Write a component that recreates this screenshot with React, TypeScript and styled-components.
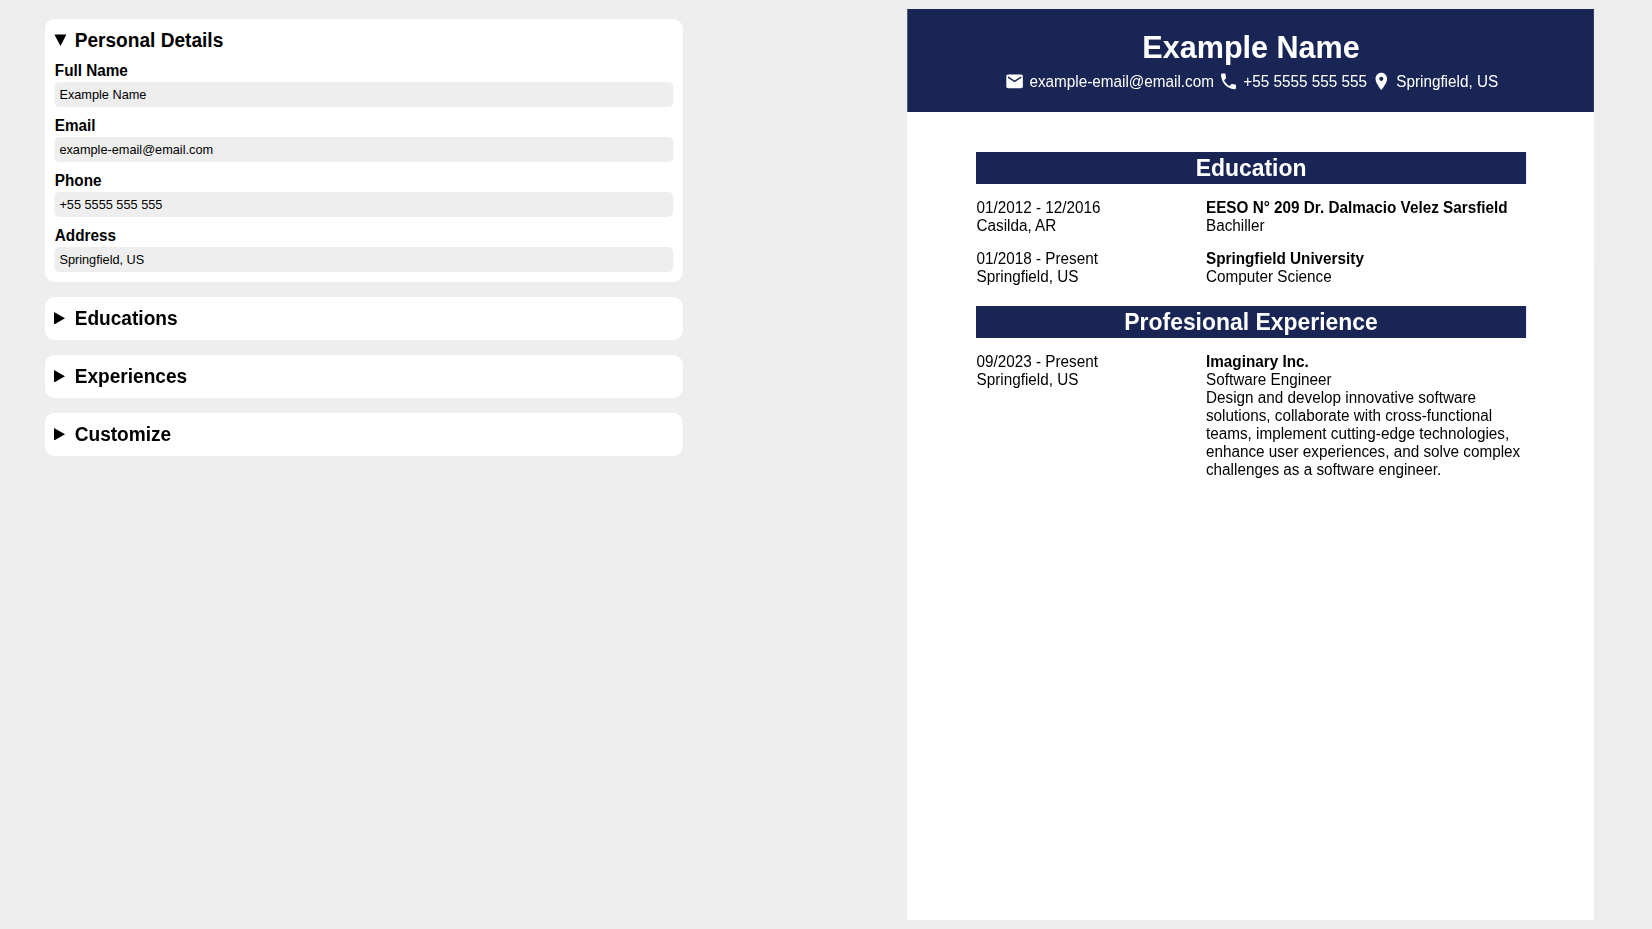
import { useState } from "react";
import styled, { createGlobalStyle } from "styled-components";
import { MdEmail, MdLocationOn, MdPhone } from "react-icons/md";

const NAVY = "#192655";

const GlobalStyle = createGlobalStyle`
  * { box-sizing: border-box; margin: 0; padding: 0; }
  body {
    background: #eee;
    color: #000;
    font: 16px/18px Arial, "Liberation Sans", sans-serif;
    overflow: hidden;
  }
`;

/* The layout is 1730px wide, condensed horizontally to fit a 1652px window. */
const Page = styled.div`
  display: flex;
  justify-content: space-between;
  align-items: flex-start;
  width: 1730px;
  height: 929px;
  padding: 9px 61px 9px 47px;
  transform: scaleX(0.955);
  transform-origin: 0 0;
`;

const Editor = styled.div`
  display: flex;
  flex-direction: column;
  gap: 15px;
  width: 668px;
  padding-top: 10px;
`;

const Card = styled.details`
  background: #fff;
  border-radius: 10px;
  padding: 9px 10px 10px;
`;

const CardTitle = styled.summary`
  display: flex;
  align-items: center;
  gap: 8.6px;
  height: 24px;
  margin-bottom: 1px;
  font-size: 20px;
  line-height: 24px;
  font-weight: 700;
  cursor: pointer;
  list-style: none;
  ${Card}:not([open]) & { margin-bottom: 0; }
  &::-webkit-details-marker { display: none; }
`;

const Marker = styled.svg<{ $open: boolean }>`
  width: 12.6px;
  height: 12.6px;
  margin: ${(p) => (p.$open ? "0.8px -0.4px 0 0.4px" : "0.4px 0.8px 0 -0.8px")};
  transform: rotate(${(p) => (p.$open ? 90 : 0)}deg);
`;

const Field = styled.label`
  display: flex;
  flex-direction: column;
  gap: 2px;
  padding-top: 9px;
  & + & { padding-top: 10px; }
`;

const FieldName = styled.span`
  padding-left: 0.4px;
  font-weight: 700;
  line-height: 18px;
`;

const Input = styled.input`
  height: 25px;
  padding: 0 5.2px;
  border: 0;
  border-radius: 5px;
  background: #eee;
  color: #000;
  font: 13.333px Arial, "Liberation Sans", sans-serif;
  outline: none;
`;

const Resume = styled.main`
  width: 719px;
  height: 911px;
  background: #fff;
`;

const Header = styled.header`
  display: flex;
  flex-direction: column;
  align-items: center;
  height: 103px;
  padding-top: 20px;
  background: ${NAVY};
  color: #fff;
`;

const Name = styled.h1`
  padding-left: 1px;
  font-size: 32px;
  line-height: 36px;
`;

const Contacts = styled.div`
  display: flex;
  gap: 5px;
  margin-top: 6px;
  padding-left: 2px;
`;

const Contact = styled.span`
  display: flex;
  align-items: center;
  gap: 4.9px;
  svg { width: 20.8px; height: 20.8px; }
`;

const ContactText = styled.span`
  padding-top: 1px;
`;

const Body = styled.div`
  display: flex;
  flex-direction: column;
  gap: 20px;
  padding: 40px 71px 40px 72px;
`;

const SectionTitle = styled.h2`
  height: 32px;
  margin-bottom: 15px;
  background: ${NAVY};
  color: #fff;
  font-size: 24px;
  line-height: 32px;
  text-align: center;
`;

const Entry = styled.div`
  display: grid;
  grid-template-columns: 229.3px 1fr;
  gap: 11px;
  padding-left: 0.5px;
  & + & { margin-top: 15px; }
`;

const Place = styled.h3`
  font-size: 16px;
  line-height: 18px;
`;

const Panel = ({ title, fields = [] }: { title: string; fields?: string[][] }) => {
  const [open, setOpen] = useState(fields.length > 0);
  return (
    <Card open={open} onToggle={(e) => setOpen(e.currentTarget.open)}>
      <CardTitle>
        <Marker viewBox="0 0 12 12" $open={open}>
          <path d="M0.5 0v12L11.5 6z" />
        </Marker>
        {title}
      </CardTitle>
      {fields.map(([name, value]) => (
        <Field key={name}>
          <FieldName>{name}</FieldName>
          <Input defaultValue={value} />
        </Field>
      ))}
    </Card>
  );
};

type EntryData = { dates: string; city: string; place: string; role: string; text?: string };

const Section = ({ title, entries }: { title: string; entries: EntryData[] }) => (
  <section>
    <SectionTitle>{title}</SectionTitle>
    {entries.map((e) => (
      <Entry key={e.place}>
        <div>
          <p>{e.dates}</p>
          <p>{e.city}</p>
        </div>
        <div>
          <Place>{e.place}</Place>
          <p>{e.role}</p>
          {e.text && <p>{e.text}</p>}
        </div>
      </Entry>
    ))}
  </section>
);

const details = [
  ["Full Name", "Example Name"],
  ["Email", "example-email@email.com"],
  ["Phone", "+55 5555 555 555"],
  ["Address", "Springfield, US"],
];

const educations: EntryData[] = [
  { dates: "01/2012 - 12/2016", city: "Casilda, AR", place: "EESO N° 209 Dr. Dalmacio Velez Sarsfield", role: "Bachiller" },
  { dates: "01/2018 - Present", city: "Springfield, US", place: "Springfield University", role: "Computer Science" },
];

const experiences: EntryData[] = [
  {
    dates: "09/2023 - Present",
    city: "Springfield, US",
    place: "Imaginary Inc.",
    role: "Software Engineer",
    text: "Design and develop innovative software solutions, collaborate with cross-functional teams, implement cutting-edge technologies, enhance user experiences, and solve complex challenges as a software engineer.",
  },
];

export default function App() {
  return (
    <>
      <GlobalStyle />
      <Page>
        <Editor>
          <Panel title="Personal Details" fields={details} />
          <Panel title="Educations" />
          <Panel title="Experiences" />
          <Panel title="Customize" />
        </Editor>
        <Resume>
          <Header>
            <Name>Example Name</Name>
            <Contacts>
              <Contact><MdEmail /><ContactText>example-email@email.com</ContactText></Contact>
              <Contact><MdPhone /><ContactText>+55 5555 555 555</ContactText></Contact>
              <Contact><MdLocationOn /><ContactText>Springfield, US</ContactText></Contact>
            </Contacts>
          </Header>
          <Body>
            <Section title="Education" entries={educations} />
            <Section title="Profesional Experience" entries={experiences} />
          </Body>
        </Resume>
      </Page>
    </>
  );
}
